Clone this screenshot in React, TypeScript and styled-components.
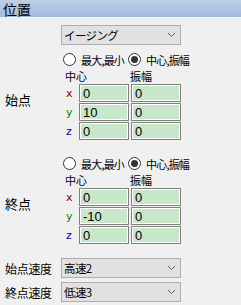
import { Fragment } from "react"
import { createGlobalStyle, styled } from "styled-components"

const GlobalStyle = createGlobalStyle`
  html, body {
    margin: 0;
    padding: 0;
    background: #f0f0f0;
  }
  body {
    font-family: "Noto Sans CJK JP", "Noto Sans", sans-serif;
    font-size: 12px;
    color: #000;
  }
`

const Panel = styled.div`
  width: 241px;
  height: 305px;
  background: #f0f0f0;
  overflow: hidden;
`

const Header = styled.div`
  box-sizing: border-box;
  height: 17px;
  padding-left: 3px;
  display: flex;
  align-items: center;
  font-size: 14px;
  line-height: 1;
  background: linear-gradient(#bcd0e8, #9fbadb);
`

const TopRow = styled.div`
  display: flex;
  padding-left: 61px;
  margin-top: 8px;
`

const SelectBox = styled.div`
  box-sizing: border-box;
  width: 120px;
  height: 20px;
  border: 1px solid #adadad;
  background: #e1e1e1;
  display: flex;
  align-items: center;
  justify-content: space-between;
  padding: 0 4px 0 2px;
  font-size: 11.5px;
  letter-spacing: -0.6px;
`

const Section = styled.div<{ $top: number }>`
  display: grid;
  grid-template-columns: 61px 1fr;
  align-items: center;
  margin-top: ${p => p.$top}px;
`

const SideLabel = styled.div`
  padding-left: 5px;
  padding-top: 5px;
  font-size: 13px;
`

const Body = styled.div`
  display: flex;
  flex-direction: column;
`

const RadioRow = styled.div`
  display: flex;
  height: 13px;
  align-items: center;
  padding-left: 2px;
`

const RadioItem = styled.label`
  display: flex;
  align-items: center;
  width: 65px;
  font-size: 11px;
  letter-spacing: -0.8px;
  white-space: nowrap;
`

const Circle = styled.span<{ $on?: boolean }>`
  box-sizing: border-box;
  width: 13px;
  height: 13px;
  border-radius: 50%;
  border: 1px solid #333;
  background: #fff;
  margin-right: 5px;
  display: flex;
  align-items: center;
  justify-content: center;
  flex-shrink: 0;
  &::after {
    content: "";
    display: ${p => (p.$on ? "block" : "none")};
    width: 7px;
    height: 7px;
    border-radius: 50%;
    background: #333;
  }
`

const ColHeads = styled.div`
  display: grid;
  grid-template-columns: 65px 52px;
  padding-left: 4px;
  height: 15px;
  margin-top: 2px;
  align-items: end;
  font-size: 11px;
  line-height: 13px;
`

const Grid = styled.div`
  display: grid;
  grid-template-columns: 16px 50px 50px;
  column-gap: 2px;
  row-gap: 1px;
  margin-top: 1px;
  align-items: center;
`

const Axis = styled.span<{ $color: string }>`
  color: ${p => p.$color};
  font-family: "DejaVu Sans", sans-serif;
  font-size: 11px;
  padding-left: 5px;
`

const Field = styled.div`
  box-sizing: border-box;
  height: 18px;
  border: 1px solid #808080;
  box-shadow: inset 1px 1px 0 #fff, inset -1px -1px 0 #fff;
  background: #c8e6c9;
  display: flex;
  align-items: center;
  padding-left: 3px;
  font-family: "Liberation Sans", sans-serif;
  font-size: 13px;
`

const SpeedList = styled.div`
  display: flex;
  flex-direction: column;
  row-gap: 4px;
  margin-top: 14px;
`

const SpeedRow = styled.div`
  display: grid;
  grid-template-columns: 61px 120px;
  align-items: center;
`

const SpeedLabel = styled.span`
  padding-left: 5px;
  font-size: 12px;
  letter-spacing: -0.3px;
`

const Chevron = () => (
  <svg width="9" height="6" viewBox="0 0 9 6">
    <path d="M1 1 L4.5 4.5 L8 1" fill="none" stroke="#606060" strokeWidth="1" />
  </svg>
)

const axes = [
  { name: "x", color: "#8b0000" },
  { name: "y", color: "#008000" },
  { name: "z", color: "#00008b" },
]

function PointBlock({ label, top, values }: { label: string; top: number; values: string[] }) {
  return (
    <Section $top={top}>
      <SideLabel>{label}</SideLabel>
      <Body>
        <RadioRow>
          <RadioItem><Circle />最大,最小</RadioItem>
          <RadioItem><Circle $on />中心,振幅</RadioItem>
        </RadioRow>
        <ColHeads>
          <span>中心</span>
          <span>振幅</span>
        </ColHeads>
        <Grid>
          {axes.map((a, i) => (
            <Fragment key={a.name}>
              <Axis $color={a.color}>{a.name}</Axis>
              <Field>{values[i]}</Field>
              <Field>0</Field>
            </Fragment>
          ))}
        </Grid>
      </Body>
    </Section>
  )
}

export default function App() {
  return (
    <Panel>
      <GlobalStyle />
      <Header>位置</Header>
      <TopRow>
        <SelectBox>
          <span>イージング</span>
          <Chevron />
        </SelectBox>
      </TopRow>
      <PointBlock label="始点" top={8} values={["0", "10", "0"]} />
      <PointBlock label="終点" top={17} values={["0", "-10", "0"]} />
      <SpeedList>
        <SpeedRow>
          <SpeedLabel>始点速度</SpeedLabel>
          <SelectBox><span>高速2</span><Chevron /></SelectBox>
        </SpeedRow>
        <SpeedRow>
          <SpeedLabel>終点速度</SpeedLabel>
          <SelectBox><span>低速3</span><Chevron /></SelectBox>
        </SpeedRow>
      </SpeedList>
    </Panel>
  )
}
